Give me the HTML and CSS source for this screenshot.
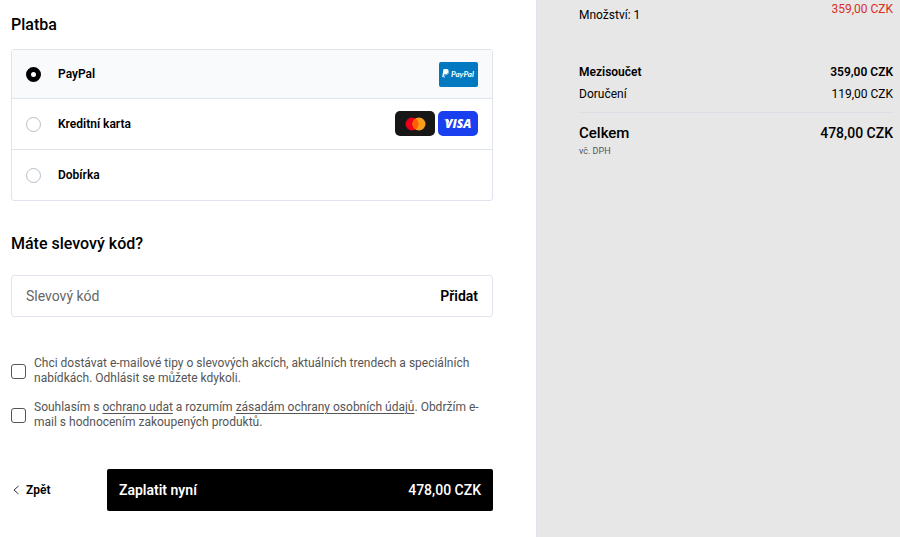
FILE: index.html
```html
<!DOCTYPE html>
<html lang="cs">
<head>
    <meta charset="utf-8">
    <meta name="viewport" content="width=device-width, initial-scale=1">
    <title>Platba</title>
    <link rel="stylesheet" href="styles.css">
</head>
<body>

    <div class="checkout">
        <main class="main">
            <form>
                <h2 class="heading" id="payment-heading">Platba</h2>
                <div class="payment-list" role="radiogroup" aria-labelledby="payment-heading">
                    <label class="payment-option">
                        <input type="radio" name="payment" value="paypal" checked>
                        <span class="payment-name">PayPal</span>
                        <svg class="card-icon" viewBox="0 0 40 26" aria-hidden="true">
                            <rect x="1" y="1" width="39" height="25" rx="2" fill="#0079c1"/>
                            <path d="M5.500 8h3q2.500 0 2 2.600-.6 2.700-3.400 2.700h-1l-.5 2.700H4.200z" fill="#fff"/>
                            <path d="M10.600 9.700q.8.700.4 2.100-.6 2.400-3.100 2.400h-.8l-.5 2.800H5.500l.2-1h.5l.5-2.400h1q2.600-.2 2.900-3.900z" fill="#a9d4ee"/>
                            <text class="paypal-text" x="13" y="16">PayPal</text>
                        </svg>
                    </label>
                    <label class="payment-option">
                        <input type="radio" name="payment" value="card">
                        <span class="payment-name">Kreditní karta</span>
                        <svg class="card-icon" viewBox="0 0 40 26" aria-hidden="true">
                            <rect width="40" height="25" rx="5" fill="#171717"/>
                            <circle cx="17" cy="13" r="6.500" fill="#eb001b"/>
                            <circle cx="24" cy="13" r="6.500" fill="#f79e1b"/>
                            <path d="M20.500 7.500a6.500 6.500 0 0 1 0 11 6.500 6.500 0 0 1 0-11z" fill="#ff5f00"/>
                        </svg>
                        <svg class="card-icon" viewBox="0 0 40 26" aria-hidden="true">
                            <rect width="40" height="25" rx="5" fill="#1a3fee"/>
                            <path d="M6 8.500h3.500q1.200.2 1.500 1.500l.8 4Q10 10 6 8.500z" fill="#fff"/>
                            <text class="visa-text" x="7" y="17">VISA</text>
                        </svg>
                    </label>
                    <label class="payment-option">
                        <input type="radio" name="payment" value="cod">
                        <span class="payment-name">Dobírka</span>
                    </label>
                </div>

                <h2 class="heading">Máte slevový kód?</h2>
                <div class="discount">
                    <input type="text" placeholder="Slevový kód" aria-label="Slevový kód">
                    <button type="button">Přidat</button>
                </div>

                <div class="consents">
                    <div class="consent">
                        <input type="checkbox" id="newsletter">
                        <label for="newsletter">Chci dostávat e-mailové tipy o slevových akcích, aktuálních trendech a speciálních nabídkách. Odhlásit se můžete kdykoli.</label>
                    </div>
                    <div class="consent">
                        <input type="checkbox" id="privacy">
                        <label for="privacy">Souhlasím s <a href="#">ochrano udat</a> a rozumím <a href="#">zásadám ochrany osobních údajů</a>. Obdržím e-mail s hodnocením zakoupených produktů.</label>
                    </div>
                </div>

                <div class="actions">
                    <a class="back" href="#">
                        <svg viewBox="0 0 6 10" aria-hidden="true"><path d="M5.500 1L1 5l4.500 4" fill="none" stroke="#333"/></svg>
                        Zpět
                    </a>
                    <button class="pay" type="submit">
                        <span>Zaplatit nyní</span>
                        <span>478,00 CZK</span>
                    </button>
                </div>
            </form>
        </main>

        <aside class="summary">
            <div class="item">
                <span class="quantity">Množství: 1</span>
                <span class="price">359,00 CZK</span>
            </div>
            <div class="row subtotal">
                <span>Mezisoučet</span>
                <span>359,00 CZK</span>
            </div>
            <div class="row">
                <span>Doručení</span>
                <span>119,00 CZK</span>
            </div>
            <div class="row total">
                <span class="total-label">Celkem</span>
                <span>478,00 CZK</span>
            </div>
            <p class="vat">vč. DPH</p>
        </aside>
    </div>

</body>
</html>
```
FILE: styles.css
```css
* {
    box-sizing: border-box;
}
body {
    margin: 0;
    font-family: Roboto, "Liberation Sans", sans-serif;
    font-size: 12px;
    line-height: 16px;
    color: #000;
    background-color: #fff;
}
input, button {
    font: inherit;
    color: inherit;
}
.checkout {
    display: grid;
    grid-template-columns: 536fr 364fr;
    min-height: 100vh;
}
.main {
    padding: 15px 43px 24px 11px;
}
.heading {
    margin: 0;
    font-size: 16px;
    line-height: 20px;
    font-weight: 500;
}

/* Payment methods */
.payment-list {
    margin: 14px 0 33px;
    border: 1px solid #dfe3eb;
    border-radius: 3px;
}
.payment-option {
    display: flex;
    align-items: center;
    gap: 3px;
    height: 51px;
    padding: 0 14px;
}
.payment-option:first-child {
    height: 48px;
}
.payment-option + .payment-option {
    border-top: 1px solid #dfe3eb;
}
.payment-option:has(input:checked) {
    background-color: #f9fafc;
}
.payment-option input {
    appearance: none;
    width: 15px;
    height: 15px;
    margin: 0 14px 0 0;
    border: 1px solid #b9c0ca;
    border-radius: 50%;
    background-color: #fff;
}
.payment-option input:checked {
    border: 5px solid #000;
}
.payment-name {
    flex-grow: 1;
    font-weight: 600;
}
.card-icon {
    width: 40px;
    height: 26px;
}
.paypal-text {
    font: italic 700 8px Lato, sans-serif;
    fill: #fff;
}
.visa-text {
    font: italic 800 12px "Open Sans", sans-serif;
    fill: #fff;
}

/* Discount code */
.discount {
    display: flex;
    height: 42px;
    margin-top: 21px;
    border: 1px solid #dfe3eb;
    border-radius: 3px;
    font-size: 14px;
}
.discount input {
    flex-grow: 1;
    min-width: 0;
    padding: 0 14px;
    border: 0;
    background: none;
}
.discount input::placeholder {
    color: #666;
}
.discount button {
    padding: 0 14px;
    border: 0;
    background: none;
    font-weight: 600;
    cursor: pointer;
}

/* Consents */
.consents {
    display: grid;
    gap: 14px;
    margin: 39px 0;
    line-height: 15px;
    color: #555;
}
.consent {
    display: flex;
    align-items: center;
    gap: 8px;
}
.consent input {
    appearance: none;
    flex-shrink: 0;
    width: 15px;
    height: 15px;
    margin: 0;
    border: 1px solid #555;
    border-radius: 3px;
}
.consent a {
    color: inherit;
    text-underline-offset: 2px;
}

/* Actions */
.actions {
    display: grid;
    grid-template-columns: 96px 1fr;
    align-items: center;
}
.back {
    display: flex;
    align-items: center;
    gap: 7px;
    padding-left: 2px;
    color: #000;
    font-weight: 600;
    text-decoration: none;
}
.back svg {
    width: 6px;
    height: 10px;
}
.pay {
    display: flex;
    justify-content: space-between;
    align-items: center;
    height: 42px;
    padding: 0 12px;
    border: 0;
    border-radius: 2px;
    background-color: #000;
    color: #fff;
    font-size: 14px;
    font-weight: 600;
    cursor: pointer;
}
.pay span:last-child {
    font-weight: 500;
}

/* Order summary */
.summary {
    padding: 1px 7px 24px 42px;
    border-left: 1px solid #dfe3eb;
    background-color: #e7e7e7;
}
.item {
    display: flex;
    justify-content: space-between;
    margin-bottom: 41px;
}
.quantity {
    padding-top: 6px;
}
.price {
    color: #d8301f;
}
.row {
    display: flex;
    justify-content: space-between;
    margin-bottom: 6px;
}
.subtotal {
    font-weight: 600;
}
.total {
    margin: 10px 0 0;
    padding-top: 10px;
    border-top: 1px solid #dcdfe6;
    font-size: 14px;
    line-height: 20px;
    font-weight: 500;
}
.total-label {
    font-size: 15px;
}
.vat {
    margin: 0;
    font-size: 9px;
    color: #555;
}
```
